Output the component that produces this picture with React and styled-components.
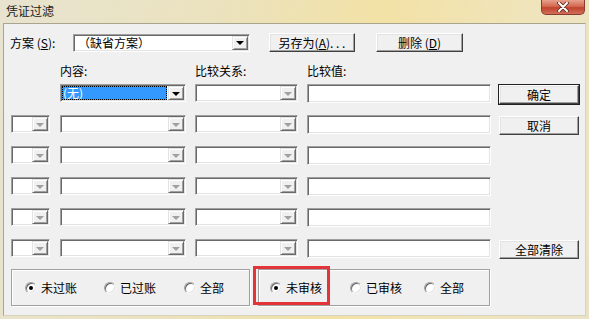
import React from "react";
import styled, { createGlobalStyle } from "styled-components";

const GlobalStyle = createGlobalStyle`
  html, body {
    margin: 0;
    padding: 0;
    background: #f0f0f0;
  }
  body {
    font-family: "Noto Sans CJK SC", "Liberation Sans", sans-serif;
    font-size: 12px;
    color: #000;
  }
`;

const Window = styled.div`
  width: 589px;
  height: 319px;
  box-sizing: border-box;
  padding: 0 3px 3px 3px;
  display: flex;
  flex-direction: column;
  background: linear-gradient(100deg, #e7e3cf 0%, #ebe2bd 35%, #f3e2a6 60%, #efe4bd 85%, #e9e2c6 100%);
`;

const TitleBar = styled.div`
  height: 23px;
  display: flex;
  justify-content: space-between;
  align-items: flex-start;
  flex-shrink: 0;
`;

const Title = styled.div`
  padding: 3px 0 0 3px;
  font-size: 12px;
  line-height: 15px;
  color: #1a1a1a;
`;

const CloseButton = styled.div`
  width: 44px;
  height: 15px;
  margin-right: 1px;
  box-sizing: border-box;
  border: 1px solid #8a3a2e;
  border-top: none;
  border-radius: 0 0 5px 5px;
  background: linear-gradient(#e6a08c 0%, #d36a52 45%, #c0432c 55%, #d0705a 100%);
  display: flex;
  align-items: center;
  justify-content: center;
`;

const Client = styled.div`
  flex: 1;
  position: relative;
  background: #f0f0f0;
  border: 1px solid #a9a48c;
  border-right-color: #d8d3bc;
  border-bottom-color: #d8d3bc;
  padding: 9px 0 0 0;
`;

const SchemeRow = styled.div`
  display: flex;
  align-items: center;
  height: 19px;
  padding-left: 6px;
`;

const Label = styled.span`
  width: ${(p) => p.$width || "auto"};
  flex-shrink: 0;
  line-height: 14px;
  white-space: nowrap;
`;

const ComboBox = styled.div`
  width: ${(p) => p.$width}px;
  height: 18px;
  box-sizing: border-box;
  display: flex;
  background: #fff;
  border: 1px solid;
  border-color: #a0a0a0 #fff #fff #a0a0a0;
  box-shadow: inset 1px 1px #696969, inset -1px -1px #e3e3e3;
  padding: 1px;
  margin-left: ${(p) => p.$ml || 0}px;
  flex-shrink: 0;
`;

const ComboText = styled.div`
  flex: 1;
  display: flex;
  align-items: center;
  padding-left: ${(p) => (p.$selected ? 1 : 3)}px;
  font-size: 12px;
  line-height: 14px;
  white-space: nowrap;
  ${(p) =>
    p.$selected &&
    `
    background: #3399ff;
    color: #fff;
    outline: 1px dotted #000;
    outline-offset: -1px;
    margin-right: 1px;
  `}
`;

const ComboArrow = styled.div`
  width: 16px;
  box-sizing: border-box;
  background: #f0f0f0;
  border: 1px solid;
  border-color: #e3e3e3 #696969 #696969 #e3e3e3;
  box-shadow: inset 1px 1px #fff, inset -1px -1px #a0a0a0;
  display: flex;
  align-items: center;
  justify-content: center;

  &::after {
    content: "";
    width: 0;
    height: 0;
    margin-top: 1px;
    border-left: 4px solid transparent;
    border-right: 4px solid transparent;
    border-top: 4px solid ${(p) => (p.$disabled ? "#a0a0a0" : "#000")};
  }
`;

const Button = styled.button`
  width: ${(p) => p.$width}px;
  height: 19px;
  margin: ${(p) => p.$margin || 0};
  padding: 0;
  box-sizing: border-box;
  background: #f0f0f0;
  font-family: inherit;
  font-size: 12px;
  line-height: 14px;
  color: #000;
  border: 1px solid;
  border-color: #fff #404040 #404040 #fff;
  box-shadow: inset -1px -1px #a0a0a0, inset 1px 1px #e3e3e3;
  ${(p) => p.$default && `outline: 1px solid #202020;`}
  flex-shrink: 0;
  white-space: nowrap;
`;

const HeaderRow = styled.div`
  display: grid;
  grid-template-columns: 49px 135px 112px 192px;
  padding-left: 7px;
  margin-top: 12px;
  height: 14px;
`;

const FilterGrid = styled.div`
  display: grid;
  grid-template-columns: 49px 135px 112px 192px 80px;
  grid-auto-rows: 18px;
  row-gap: 13px;
  padding-left: 7px;
  margin-top: 6px;
  align-items: start;
`;

const TextInput = styled.div`
  width: 184px;
  height: 19px;
  box-sizing: border-box;
  background: #fff;
  border: 1px solid;
  border-color: #a0a0a0 #fff #fff #a0a0a0;
  box-shadow: inset 1px 1px #696969, inset -1px -1px #e3e3e3;
`;

const GroupRow = styled.div`
  display: flex;
  gap: 8px;
  padding-left: 7px;
  margin-top: 12px;
`;

const GroupBox = styled.div`
  width: ${(p) => p.$width}px;
  height: 37px;
  box-sizing: border-box;
  border: 1px solid #a0a0a0;
  box-shadow: inset 1px 1px #fff, 1px 1px #fff;
  display: flex;
  align-items: center;
  padding-left: ${(p) => p.$pl}px;
`;

const RadioItem = styled.label`
  display: flex;
  align-items: center;
  width: ${(p) => (p.$width ? `${p.$width}px` : "auto")};
  flex-shrink: 0;
  gap: 4px;
  line-height: 14px;
  padding-top: 1px;
`;

const RadioCircle = styled.span`
  width: 12px;
  height: 12px;
  box-sizing: border-box;
  border-radius: 50%;
  background: #fff;
  border: 1px solid;
  border-color: #a0a0a0 #f4f4f4 #f4f4f4 #a0a0a0;
  box-shadow: inset 1px 1px #696969, inset -1px -1px #e3e3e3;
  display: flex;
  align-items: center;
  justify-content: center;

  &::after {
    content: "";
    width: 4px;
    height: 4px;
    border-radius: 50%;
    background: ${(p) => (p.$checked ? "#000" : "transparent")};
  }
`;

const Highlight = styled.div`
  position: absolute;
  left: 249px;
  top: 242px;
  width: 77px;
  height: 39px;
  box-sizing: border-box;
  border: 3px solid #e3343a;
  pointer-events: none;
`;

const Combo = ({ width, ml, text, selected, disabled }) => (
  <ComboBox $width={width} $ml={ml}>
    <ComboText $selected={selected}>{text}</ComboText>
    <ComboArrow $disabled={disabled} />
  </ComboBox>
);

const Radio = ({ label, checked, width }) => (
  <RadioItem $width={width}>
    <RadioCircle $checked={checked} />
    {label}
  </RadioItem>
);

const rows = [0, 1, 2, 3, 4, 5];

const sideButtons = {
  0: { label: "确定", default: true },
  1: { label: "取消" },
  5: { label: "全部清除" },
};

const App = () => {
  return (
    <>
      <GlobalStyle />
      <Window>
        <TitleBar>
          <Title>凭证过滤</Title>
          <CloseButton>
            <svg width="14" height="10" viewBox="0 0 14 10">
              <path
                d="M3 1 L11 9 M11 1 L3 9"
                stroke="#5a2a20"
                strokeWidth="3.6"
                strokeLinecap="round"
              />
              <path
                d="M3 1 L11 9 M11 1 L3 9"
                stroke="#fff"
                strokeWidth="2"
                strokeLinecap="round"
              />
            </svg>
          </CloseButton>
        </TitleBar>
        <Client>
          <SchemeRow>
            <Label $width="63px">
              方案 (<u>S</u>):
            </Label>
            <Combo width={177} text="（缺省方案）" />
            <Button $width={86} $margin="0 0 0 19px">
              另存为(<u>A</u>). . .
            </Button>
            <Button $width={87} $margin="0 0 0 21px">
              删除 (<u>D</u>)
            </Button>
          </SchemeRow>

          <HeaderRow>
            <span />
            <Label>内容:</Label>
            <Label>比较关系:</Label>
            <Label>比较值:</Label>
          </HeaderRow>

          <FilterGrid>
            {rows.map((r) => (
              <React.Fragment key={r}>
                {r === 0 ? <span /> : <Combo width={39} disabled />}
                {r === 0 ? (
                  <Combo width={126} text="(无)" selected />
                ) : (
                  <Combo width={126} disabled />
                )}
                <Combo width={103} disabled />
                <TextInput />
                {sideButtons[r] ? (
                  <Button
                    $width={80}
                    $default={sideButtons[r].default}
                    $margin="1px 0 0 0"
                  >
                    {sideButtons[r].label}
                  </Button>
                ) : (
                  <span />
                )}
              </React.Fragment>
            ))}
          </FilterGrid>

          <GroupRow>
            <GroupBox $width={239} $pl={13}>
              <Radio label="未过账" checked width={79} />
              <Radio label="已过账" width={80} />
              <Radio label="全部" />
            </GroupBox>
            <GroupBox $width={232} $pl={11}>
              <Radio label="未审核" checked width={80} />
              <Radio label="已审核" width={74} />
              <Radio label="全部" />
            </GroupBox>
          </GroupRow>

          <Highlight />
        </Client>
      </Window>
    </>
  );
};

export default App;
